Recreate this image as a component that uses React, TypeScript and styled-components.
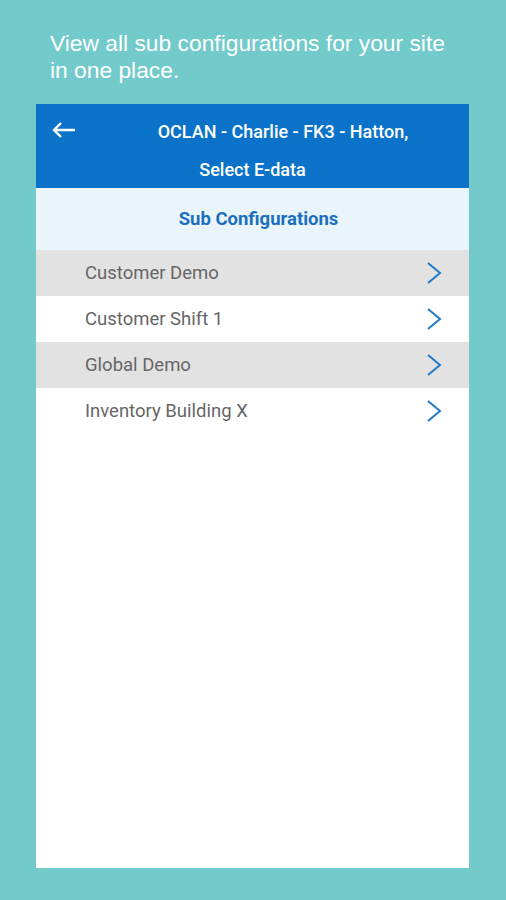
import React from 'react';
import styled, { createGlobalStyle } from 'styled-components';

const GlobalStyle = createGlobalStyle`
  html, body {
    margin: 0;
    padding: 0;
    background: #72cacb;
  }
`;

const Page = styled.div`
  width: 506px;
  height: 900px;
  background: #72cacb;
  display: flex;
  flex-direction: column;
  box-sizing: border-box;
  padding: 30px 37px 32px 36px;
`;

const Caption = styled.p`
  margin: 0 0 20px 14px;
  font-family: 'Liberation Sans', Arial, sans-serif;
  font-size: 22.8px;
  line-height: 27px;
  color: #ffffff;
`;

const Screen = styled.div`
  flex: 1;
  display: flex;
  flex-direction: column;
  background: #ffffff;
  font-family: Roboto, 'Noto Sans', sans-serif;
`;

const Header = styled.div`
  background: #0a73c9;
  height: 84px;
  box-sizing: border-box;
  padding-top: 8px;
  color: #ffffff;
`;

const TitleRow = styled.div`
  display: flex;
  align-items: center;
  height: 40px;
`;

const BackButton = styled.div`
  width: 61px;
  display: flex;
  justify-content: flex-start;
  padding-left: 16px;
  box-sizing: border-box;
  margin-top: -4px;
`;

const Title = styled.div<{ $centered?: boolean }>`
  flex: 1;
  text-align: center;
  font-size: 18px;
  font-weight: 500;
  line-height: ${(p) => (p.$centered ? '36px' : '40px')};
`;

const SubHeader = styled.div`
  background: #eaf5fb;
  height: 62px;
  display: flex;
  align-items: center;
  justify-content: center;
  padding-left: 12px;
  font-size: 18.5px;
  font-weight: 700;
  color: #1b6fbe;
`;

const List = styled.div`
  display: flex;
  flex-direction: column;
`;

const Row = styled.div<{ $shaded: boolean }>`
  height: 46px;
  display: flex;
  align-items: center;
  justify-content: space-between;
  padding: 0 27px 0 49px;
  background: ${(p) => (p.$shaded ? '#e2e2e2' : '#ffffff')};
  font-size: 18.5px;
  color: #666666;
`;

const items = ['Customer Demo', 'Customer Shift 1', 'Global Demo', 'Inventory Building X'];

const Chevron = () => (
  <svg width="16" height="24" viewBox="0 0 16 24" fill="none">
    <path d="M2 2 L14 12 L2 22" stroke="#1f78c8" strokeWidth="2" strokeLinejoin="miter" />
  </svg>
);

const BackArrow = () => (
  <svg width="24" height="16" viewBox="0 0 24 16" fill="none">
    <path d="M23 8 H2 M9 1 L2 8 L9 15" stroke="#ffffff" strokeWidth="2.4" />
  </svg>
);

const App: React.FC = () => {
  return (
    <>
      <GlobalStyle />
      <Page>
        <Caption>
          View all sub configurations for your site
          <br />
          in one place.
        </Caption>
        <Screen>
          <Header>
            <TitleRow>
              <BackButton>
                <BackArrow />
              </BackButton>
              <Title>OCLAN - Charlie - FK3 - Hatton,</Title>
            </TitleRow>
            <Title $centered>Select E-data</Title>
          </Header>
          <SubHeader>Sub Configurations</SubHeader>
          <List>
            {items.map((name, i) => (
              <Row key={name} $shaded={i % 2 === 0}>
                <span>{name}</span>
                <Chevron />
              </Row>
            ))}
          </List>
        </Screen>
      </Page>
    </>
  );
};

export default App;
